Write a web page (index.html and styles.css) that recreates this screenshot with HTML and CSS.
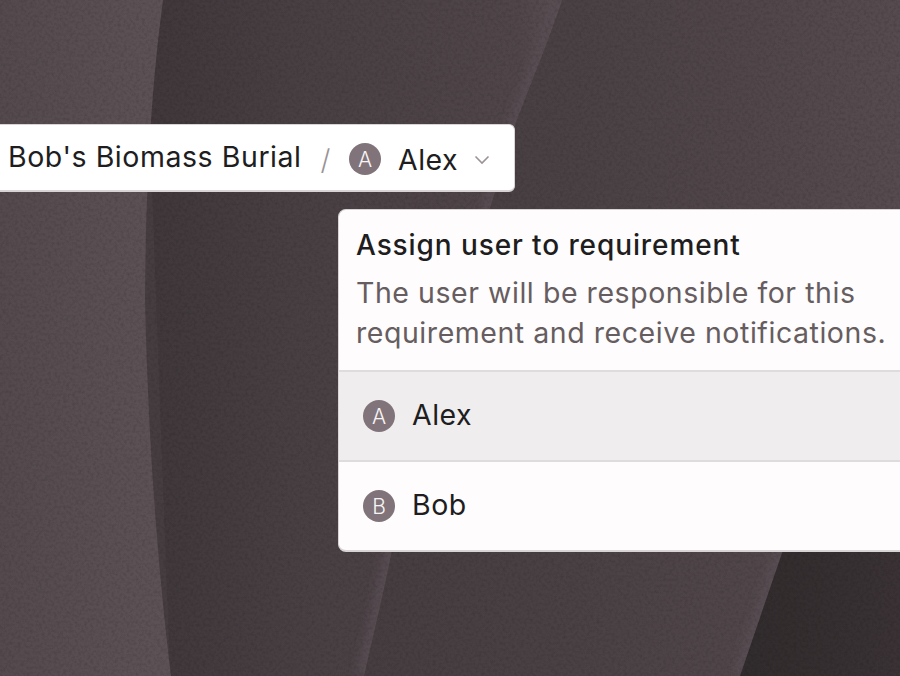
FILE: index.html
```html
<!DOCTYPE html>
<html lang="en">
<head>
<meta charset="utf-8">
<title>Assign user</title>
<link rel="stylesheet" href="styles.css">
</head>
<body>
<svg class="backdrop" viewBox="0 0 900 676" preserveAspectRatio="none" aria-hidden="true">
  <defs>
    <linearGradient id="g1" x1="0" x2="1" y1="0" y2="0"><stop offset="0" stop-color="#544a4e"/><stop offset="1" stop-color="#5d5256"/></linearGradient>
    <linearGradient id="g2" gradientUnits="userSpaceOnUse" x1="145" x2="560" y1="0" y2="0"><stop offset="0" stop-color="#3f373a"/><stop offset="0.35" stop-color="#483f43"/><stop offset="0.9" stop-color="#50464a"/><stop offset="1" stop-color="#594e52"/></linearGradient>
    <linearGradient id="g3" gradientUnits="userSpaceOnUse" x1="360" x2="900" y1="0" y2="0"><stop offset="0" stop-color="#463d40"/><stop offset="0.4" stop-color="#4a4144"/><stop offset="1" stop-color="#564b4f"/></linearGradient>
    <linearGradient id="g4" gradientUnits="userSpaceOnUse" x1="730" x2="900" y1="0" y2="0"><stop offset="0" stop-color="#302b2c"/><stop offset="1" stop-color="#3a3234"/></linearGradient>
    <clipPath id="band"><path d="M145 0 H562 C545 50 530 85 515 125 C470 280 415 430 392 550 C382 600 372 640 364 676 H170 Z"/></clipPath>
    <filter id="soft" x="-20%" y="-20%" width="140%" height="140%"><feGaussianBlur stdDeviation="5"/></filter>
    <filter id="grain" x="0" y="0" width="100%" height="100%">
      <feTurbulence type="fractalNoise" baseFrequency="0.33" numOctaves="3" seed="7"/>
      <feColorMatrix type="matrix" values="0 0 0 0 0  0 0 0 0 0  0 0 0 0 0  1.5 0 0 0 -0.6"/>
    </filter>
  </defs>
  <rect width="900" height="676" fill="url(#g3)"/>
  <path class="streak" d="M783 550 L740 676" filter="url(#soft)"/>
  <path d="M783 550 C810 470 855 360 900 290 V676 H740 Z" fill="url(#g4)"/>
  <path d="M145 0 H562 C545 50 530 85 515 125 C470 280 415 430 392 550 C382 600 372 640 364 676 H170 Z" fill="url(#g2)"/>
  <g clip-path="url(#band)"><path class="streak" d="M562 0 C545 50 530 85 515 125 C470 280 415 430 392 550 C382 600 372 640 364 676" filter="url(#soft)"/></g>
  <path d="M0 0 H163 C155 60 146 150 145 300 C148 440 158 570 171 676 H0 Z" fill="url(#g1)"/>
  <rect width="900" height="676" filter="url(#grain)" opacity="0.16"/>
</svg>
<main class="stage">
  <div class="crumb">
    <span class="crumb-title">Bob's Biomass Burial</span>
    <span class="crumb-slash">/</span>
    <span class="avatar">A</span>
    <span class="name">Alex</span>
    <svg class="chevron" viewBox="0 0 16 10" aria-hidden="true"><path d="M1.500 1.500 8 8l6.500-6.500"/></svg>
  </div>
  <section class="panel">
    <header class="panel-head">
      <h2 class="panel-title">Assign user to requirement</h2>
      <p class="panel-desc">The user will be responsible for this<br>requirement and receive notifications.</p>
    </header>
    <div class="row row-active"><span class="avatar">A</span><span class="name">Alex</span></div>
    <div class="row"><span class="avatar">B</span><span class="name">Bob</span></div>
  </section>
</main>
</body>
</html>
```
FILE: styles.css
```css
* { box-sizing: border-box; }
html, body { margin: 0; height: 100%; }
body {
  position: relative;
  width: 900px;
  height: 676px;
  overflow: hidden;
  background: #473e41;
  font-family: "Inter", "Liberation Sans", sans-serif;
  color: #201d1e;
}
.backdrop { position: absolute; inset: 0; width: 900px; height: 676px; display: block; }
.streak { fill: none; stroke: #594e52; stroke-width: 14; }
.stage {
  position: relative;
  display: flex;
  flex-direction: column;
  align-items: flex-start;
  padding-top: 124px;
}
.crumb {
  display: flex;
  align-items: center;
  height: 68px;
  margin-left: -10px;
  padding: 3px 24px 0 17px;
  background: #fff;
  border: 1px solid #d8d3d4;
  border-bottom-width: 2px;
  border-radius: 6px;
  font-size: 28.500px;
  letter-spacing: 0.5px;
}
.crumb-title { padding-bottom: 5px; letter-spacing: 0.55px; }
.crumb-slash { margin: 0 18px 0 19px; color: #9a9396; font-weight: 300; }
.avatar {
  flex: none;
  display: flex;
  align-items: center;
  justify-content: center;
  width: 32px;
  height: 32px;
  border-radius: 50%;
  background: #80747a;
  color: #f8f4f5;
  font-size: 21px;
  font-weight: 300;
  letter-spacing: 0;
}
.name { margin-left: 17px; }
.chevron {
  width: 16px;
  height: 10px;
  margin: 1px 0 0 16px;
  fill: none;
  stroke: #9a9396;
  stroke-width: 1.6;
}
.panel {
  width: 620px;
  margin: 17px 0 0 338px;
  background: #fefcfd;
  border: 1px solid #d8d3d4;
  border-bottom-width: 2px;
  border-radius: 8px;
  overflow: hidden;
}
.panel-head { padding: 16px 17px 17px; }
.panel-title { margin: 0; font-size: 28px; line-height: 38px; font-weight: 500; letter-spacing: 0.9px; }
.panel-desc { margin: 9px 0 0; font-size: 28.500px; line-height: 40px; color: #665d60; letter-spacing: 0.55px; }
.row {
  display: flex;
  align-items: center;
  height: 90px;
  padding: 0 24px;
  border-top: 2px solid #dedcdc;
  font-size: 28.500px;
  letter-spacing: 0.5px;
}
.row-active { background: #efedee; }
.row .name { padding-bottom: 3px; }
```
